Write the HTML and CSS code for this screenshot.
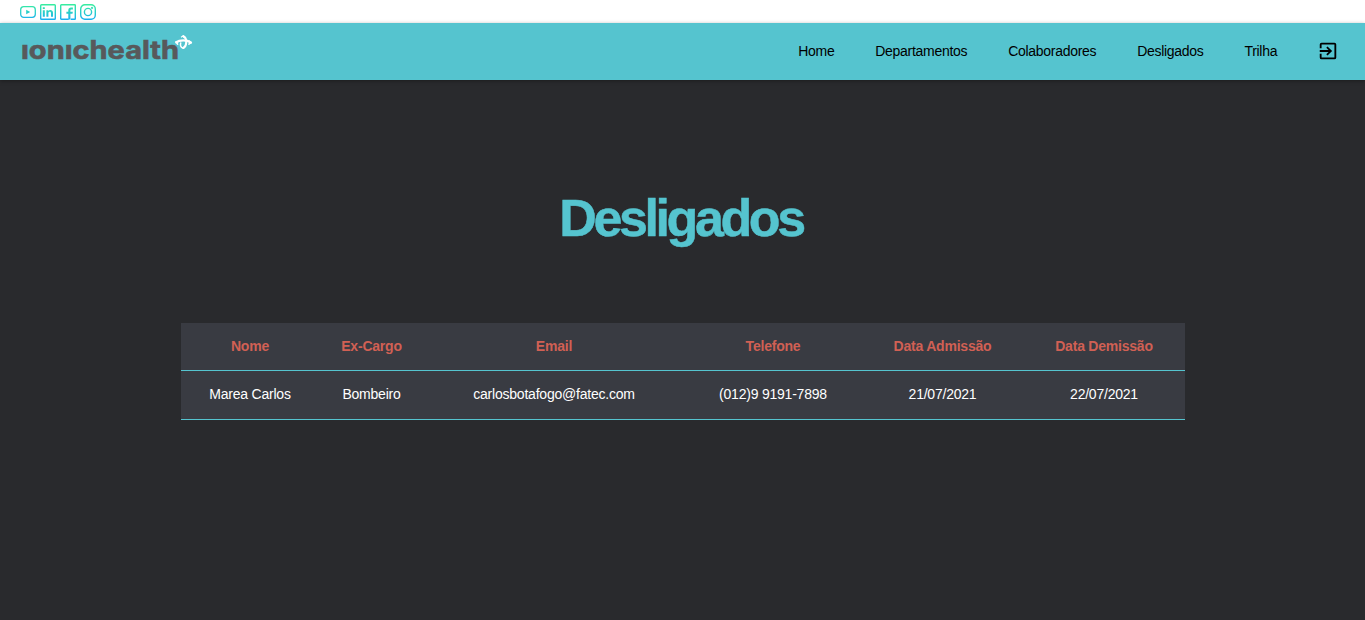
FILE: index.html
```html
<!DOCTYPE html>
<html lang="pt-BR">
<head>
<meta charset="utf-8">
<title>Desligados</title>
<link rel="stylesheet" href="styles.css">
</head>
<body>
<div class="social">
  <svg class="social-icon" viewBox="0 0 16 16"><defs><linearGradient id="g" gradientUnits="userSpaceOnUse" x1="0" y1="0" x2="0" y2="16"><stop offset="0" stop-color="#38ef9c"/><stop offset="1" stop-color="#1aaef5"/></linearGradient></defs><rect x=".7" y="2.7" width="14.6" height="10.6" rx="3" fill="none" stroke="url(#g)" stroke-width="1.3"/><path d="M6.2 5.7v4.6L10.2 8z" fill="url(#g)"/></svg>
  <svg class="social-icon" viewBox="0 0 16 16"><rect x=".7" y=".7" width="14.6" height="14.6" rx=".8" fill="none" stroke="url(#g)" stroke-width="1.4"/><path d="M2.8 6.2h2v6.6h-2zM2.8 3.2h2v1.9h-2zM6.4 6.2h1.9v.9c1.2-1.7 4.7-1.4 4.7 1.6v4.1h-2V9.2c0-2-2.6-1.8-2.6 0v3.6h-2z" fill="url(#g)"/></svg>
  <svg class="social-icon" viewBox="0 0 16 16"><path d="M8.7 15.3H1.3a.6.6 0 0 1-.6-.6V1.3a.6.6 0 0 1 .6-.6h13.4a.6.6 0 0 1 .6.6v13.4a.6.6 0 0 1-.6.6h-4" fill="none" stroke="url(#g)" stroke-width="1.4"/><path d="M8.3 15.6V9.8H6.4V7.7h1.9V6.3C8.3 4.3 9.4 3.5 11 3.5h1.9v2h-1.3c-.9 0-1.2.3-1.2 1.1v1.1h2.4l-.3 2.1h-2.1v5.8z" fill="url(#g)"/></svg>
  <svg class="social-icon" viewBox="0 0 16 16" fill="none" stroke="url(#g)" stroke-width="1.4"><rect x=".7" y=".7" width="14.6" height="14.6" rx="4.2"/><circle cx="8" cy="8" r="3.6"/><circle cx="12.1" cy="3.9" r=".4"/></svg>
</div>
<header class="navbar">
  <svg class="logo" viewBox="0 0 180 40">
    <text class="logo-text" x="0" y="27" textLength="158" lengthAdjust="spacingAndGlyphs">ıonıchealth</text>
    <g fill="none" stroke="#fff" stroke-linecap="round"><path d="M155.3 10.3c3.5-2.6 10.5-2.6 14.5.2" stroke-width="2.4"/><path d="M162.4 4.2c3.8 1.8 3.8 9.5 0 11.8" stroke-width="2.1"/><path d="M159.7 11c-.6 2.2.2 4.2 2 5" stroke-width="1.5"/><path d="M168.2 9.2l1.7 1.5-2 1.4M155.2 9.9l1.4 2.2" stroke-width="1.7"/><path d="M160.4 5l1.6-1 1.2 1.6" stroke-width="1.2"/></g>
  </svg>
  <nav class="menu">
    <a>Home</a><a>Departamentos</a><a>Colaboradores</a><a>Desligados</a><a>Trilha</a>
    <svg class="exit" viewBox="0 0 24 24"><path d="M10.09 15.59 11.5 17l5-5-5-5-1.41 1.41L12.67 11H3v2h9.67l-2.58 2.59zM19 3H5a2 2 0 0 0-2 2v4h2V5h14v14H5v-4H3v4a2 2 0 0 0 2 2h14a2 2 0 0 0 2-2V5a2 2 0 0 0-2-2z"/></svg>
  </nav>
</header>
<main class="content">
  <h1 class="title">Desligados</h1>
  <table class="table">
    <colgroup><col class="c-name"><col class="c-role"><col class="c-mail"><col class="c-phone"><col class="c-in"><col class="c-out"></colgroup>
    <thead><tr><th>Nome</th><th>Ex-Cargo</th><th>Email</th><th>Telefone</th><th>Data Admissão</th><th>Data Demissão</th></tr></thead>
    <tbody><tr><td>Marea Carlos</td><td>Bombeiro</td><td>carlosbotafogo@fatec.com</td><td>(012)9 9191-7898</td><td>21/07/2021</td><td>22/07/2021</td></tr></tbody>
  </table>
</main>
</body>
</html>
```
FILE: styles.css
```css
* { box-sizing: border-box; }
body {
  margin: 0;
  height: 620px;
  overflow: hidden;
  display: flex;
  flex-direction: column;
  background: #292a2d;
  font: 14px "Liberation Sans", Arial, sans-serif;
}
.social {
  height: 23px;
  padding: 4px 20px 0;
  display: flex;
  gap: 4px;
  background: #fff;
}
.social-icon { width: 16px; height: 16px; }
.navbar {
  height: 57px;
  flex: none;
  display: flex;
  justify-content: space-between;
  align-items: center;
  padding: 0 26px 2px 21px;
  background: #55c4cf;
  box-shadow: 0 1px 4px rgba(0, 0, 0, .35);
}
.logo { width: 180px; height: 40px; margin-top: 2px; }
.logo-text { font: 700 25px Inter, sans-serif; fill: #58595b; stroke: #58595b; stroke-width: .6px; }
.menu {
  display: flex;
  align-items: center;
  gap: 40.8px;
  color: #000;
  letter-spacing: -.28px;
}
.exit { width: 22px; height: 22px; margin-left: -1px; }
.content {
  display: flex;
  flex-direction: column;
  align-items: center;
}
.title {
  margin: 108px 0 0;
  padding-right: 3px;
  font-size: 52px;
  line-height: 60px;
  letter-spacing: -3.4px;
  color: #55c4cf;
  -webkit-text-stroke: .5px #55c4cf;
}
.table {
  width: 1004px;
  margin-top: 75px;
  table-layout: fixed;
  border-collapse: separate;
  border-spacing: 0;
  background: #393b42;
  color: #fff;
  text-align: center;
}
.c-name { width: 138px; }
.c-role { width: 105px; }
.c-mail { width: 260px; }
.c-phone { width: 178px; }
.c-in { width: 161px; }
.c-out { width: 162px; }
.table th, .table td {
  padding: 0 0 2px 1px;
  border-bottom: 1px solid #55c4cf;
  white-space: nowrap;
  letter-spacing: -.22px;
}
.table th { height: 48px; color: #d16054; }
.table td { height: 49px; }
```
